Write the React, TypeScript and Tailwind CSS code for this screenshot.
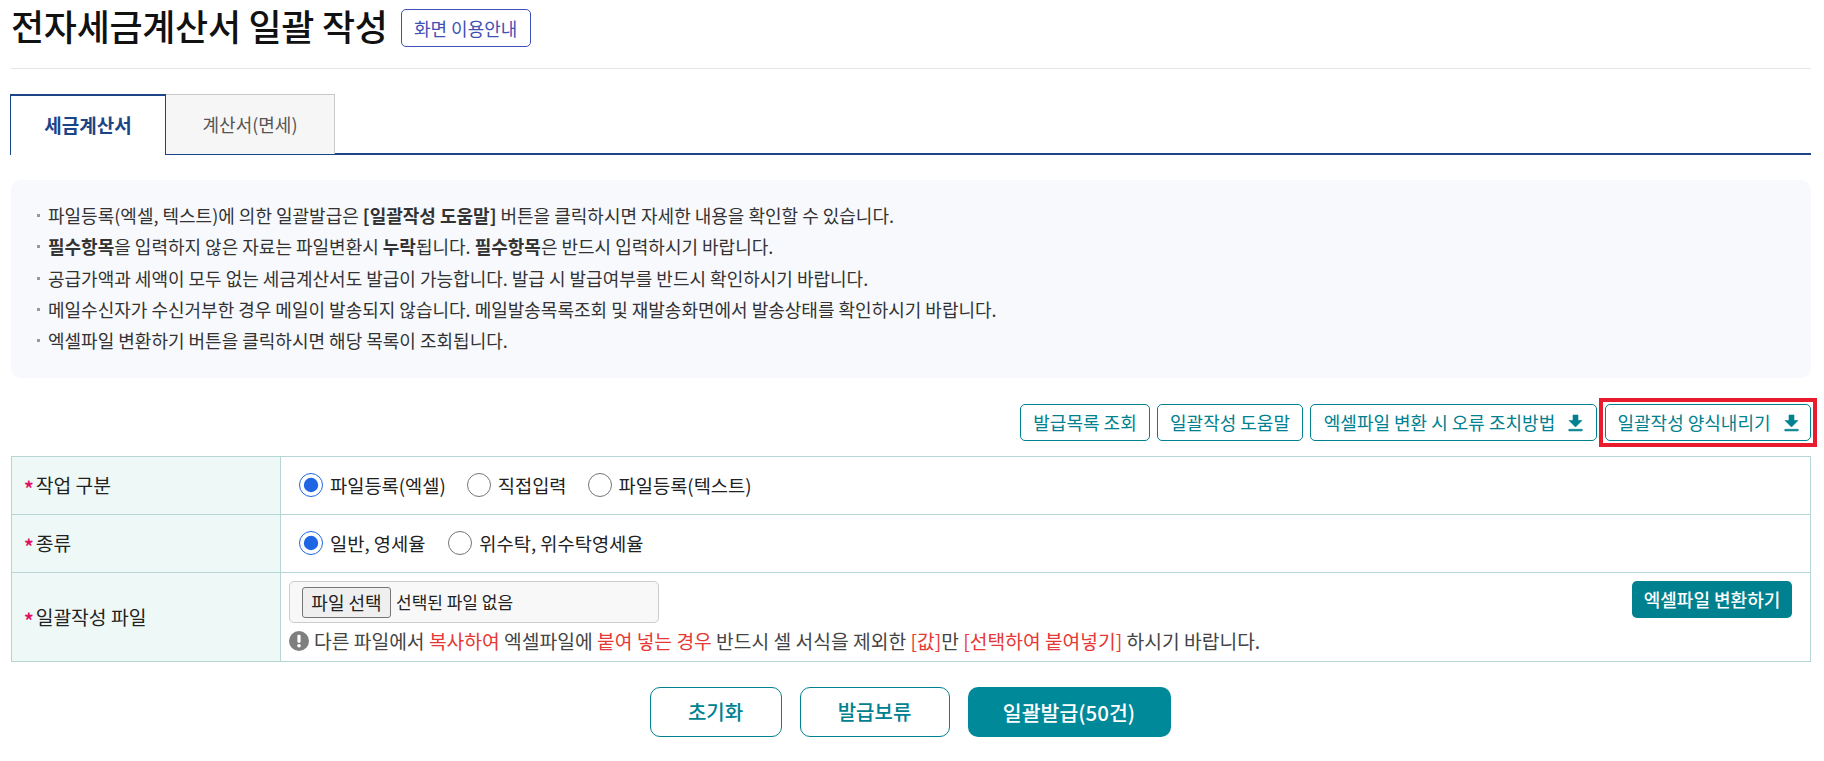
function Dl() {
  return (
    <svg width="15" height="18" viewBox="0 0 15 18" className="ml-[13px] shrink-0" fill="#00818f" stroke="#00818f" strokeWidth="0.6" strokeLinejoin="round">
      <path d="M5 1h5v5.5h4L7.5 13 1 6.5h4z" />
      <rect x="0.8" y="15.3" width="13.4" height="1.6" />
    </svg>
  );
}
function Radio({ checked, label, className = "" }: { checked?: boolean; label: string; className?: string }) {
  return (
    <label className={"flex items-center " + className}>
      <input type="radio" defaultChecked={checked} name={label} className="w-6 h-6 m-0 accent-[#1f66e5]" />
      <span className="ml-[7px] text-[18.7px] text-[#222]">{label}</span>
    </label>
  );
}
function Th({ children }: { children: React.ReactNode }) {
  return (
    <div className="w-[269px] shrink-0 bg-[#eef9f7] border-r border-[#b6d6d3] flex items-center pl-[12px] text-[19.3px] text-[#222]">
      <span className="text-[#e0115f] text-[19px] font-bold mr-[2px] translate-y-[3px]">*</span>
      {children}
    </div>
  );
}
const OutBtn = "h-[37px] flex items-center justify-center bg-white border border-[#00818f] rounded-[5px] text-[18px] text-[#00818f] whitespace-nowrap";
export default function App() {
  const R = "text-[#e53935]";
  return (
    <div className="bg-white min-h-[761px] pl-[11px] pr-[13px]" style={{ fontFamily: '"Noto Sans CJK KR","Noto Sans",sans-serif' }}>
      <div className="h-[69px] border-b border-[#e5e5e5] pt-[9px]">
        <div className="flex items-start">
          <h1 className="text-[36px] leading-[38px] -mt-[3px] font-medium text-[#111] tracking-[-0.3px]">전자세금계산서 일괄 작성</h1>
          <button className="ml-[13px] w-[130px] h-[38px] border border-[#3f51b5] rounded-[5px] text-[18px] text-[#3f51b5]">화면 이용안내</button>
        </div>
      </div>
      <div className="mt-[25px] h-[61px] flex border-b-2 border-[#1c4587]">
        <div className="w-[156px] h-[61px] -ml-[1px] bg-white border-x border-t-2 border-[#1c4587] flex items-center justify-center text-[19px] font-bold text-[#1c4587]">세금계산서</div>
        <div className="w-[169px] h-[60px] bg-[#f6f6f6] border-r border-t border-[#c8c8c8] flex items-center justify-center text-[18px] text-[#555]">계산서(면세)</div>
      </div>
      <div className="mt-[25px] h-[198px] bg-[#f7f9fd] rounded-[10px] pt-[20px] pl-[26px] text-[18px] leading-[31.3px] text-[#333]">
        {[
          <>파일등록(엑셀, 텍스트)에 의한 일괄발급은 <b>[일괄작성 도움말]</b> 버튼을 클릭하시면 자세한 내용을 확인할 수 있습니다.</>,
          <><b>필수항목</b>을 입력하지 않은 자료는 파일변환시 <b>누락</b>됩니다. <b>필수항목</b>은 반드시 입력하시기 바랍니다.</>,
          <>공급가액과 세액이 모두 없는 세금계산서도 발급이 가능합니다. 발급 시 발급여부를 반드시 확인하시기 바랍니다.</>,
          <>메일수신자가 수신거부한 경우 메일이 발송되지 않습니다. 메일발송목록조회 및 재발송화면에서 발송상태를 확인하시기 바랍니다.</>,
          <>엑셀파일 변환하기 버튼을 클릭하시면 해당 목록이 조회됩니다.</>,
        ].map((t, i) => (
          <div key={i} className="flex items-center">
            <span className="w-[3px] h-[3px] bg-[#999] mr-[8px] shrink-0" />
            <span>{t}</span>
          </div>
        ))}
      </div>
      <div className="mt-[26px] flex justify-end gap-[7px]">
        <button className={OutBtn + " w-[130px]"}>발급목록 조회</button>
        <button className={OutBtn + " w-[146px]"}>일괄작성 도움말</button>
        <button className={OutBtn + " w-[287px]"}>엑셀파일 변환 시 오류 조치방법<Dl /></button>
        <div className="relative ml-[1px]">
          <button className={OutBtn + " w-[206px]"}>일괄작성 양식내리기<Dl /></button>
          <div className="absolute -left-[6px] -right-[6px] -top-[6px] -bottom-[6px] border-[4px] border-[#e81c2c] pointer-events-none" />
        </div>
      </div>
      <div className="mt-[15px] border border-[#b6d6d3]">
        <div className="flex h-[58px] border-b border-[#b6d6d3]">
          <Th>작업 구분</Th>
          <div className="flex items-center pl-[18px]">
            <Radio checked label="파일등록(엑셀)" />
            <Radio label="직접입력" className="ml-[21px]" />
            <Radio label="파일등록(텍스트)" className="ml-[21px]" />
          </div>
        </div>
        <div className="flex h-[58px] border-b border-[#b6d6d3]">
          <Th>종류</Th>
          <div className="flex items-center pl-[18px]">
            <Radio checked label="일반, 영세율" />
            <Radio label="위수탁, 위수탁영세율" className="ml-[23px]" />
          </div>
        </div>
        <div className="flex h-[88px]">
          <Th>일괄작성 파일</Th>
          <div className="flex-1 pl-[8px] pr-[18px] pt-[8px] flex justify-between">
            <div>
              <div className="w-[370px] h-[42px] bg-[#f8f8f8] border border-[#ccc] rounded-[5px] flex items-center pl-[12px] text-[17px] text-[#222]">
                <span className="w-[89px] h-[31px] bg-[#efefef] border border-[#767676] rounded-[3px] flex items-center justify-center text-[18px]">파일 선택</span>
                <span className="ml-[5px]">선택된 파일 없음</span>
              </div>
              <div className="mt-[3px] flex items-center text-[19.25px] leading-[30px] text-[#444] whitespace-nowrap">
                <svg width="20" height="20" viewBox="0 0 20 20" className="mr-[5px] shrink-0">
                  <circle cx="10" cy="10" r="10" fill="#7f7f7f" />
                  <rect x="8.4" y="3.8" width="3.2" height="8" rx="1.2" fill="#fff" />
                  <circle cx="10" cy="14.8" r="1.8" fill="#fff" />
                </svg>
                <span>다른 파일에서 <span className={R}>복사하여</span> 엑셀파일에 <span className={R}>붙여 넣는 경우</span> 반드시 셀 서식을 제외한 <span className={R}>[값]</span>만 <span className={R}>[선택하여 붙여넣기]</span> 하시기 바랍니다.</span>
              </div>
            </div>
            <button className="w-[160px] h-[37px] bg-[#00818f] rounded-[5px] text-white text-[18px] font-medium">엑셀파일 변환하기</button>
          </div>
        </div>
      </div>
      <div className="mt-[25px] flex justify-center gap-[18px] pr-[2px]">
        <button className="w-[132px] h-[50px] bg-white border border-[#00818f] rounded-[10px] text-[#00818f] text-[20px] font-medium">초기화</button>
        <button className="w-[150px] h-[50px] bg-white border border-[#00818f] rounded-[10px] text-[#00818f] text-[20px] font-medium">발급보류</button>
        <button className="w-[203px] h-[50px] bg-[#008998] rounded-[10px] text-white text-[20.5px] font-medium">일괄발급(50건)</button>
      </div>
    </div>
  );
}
